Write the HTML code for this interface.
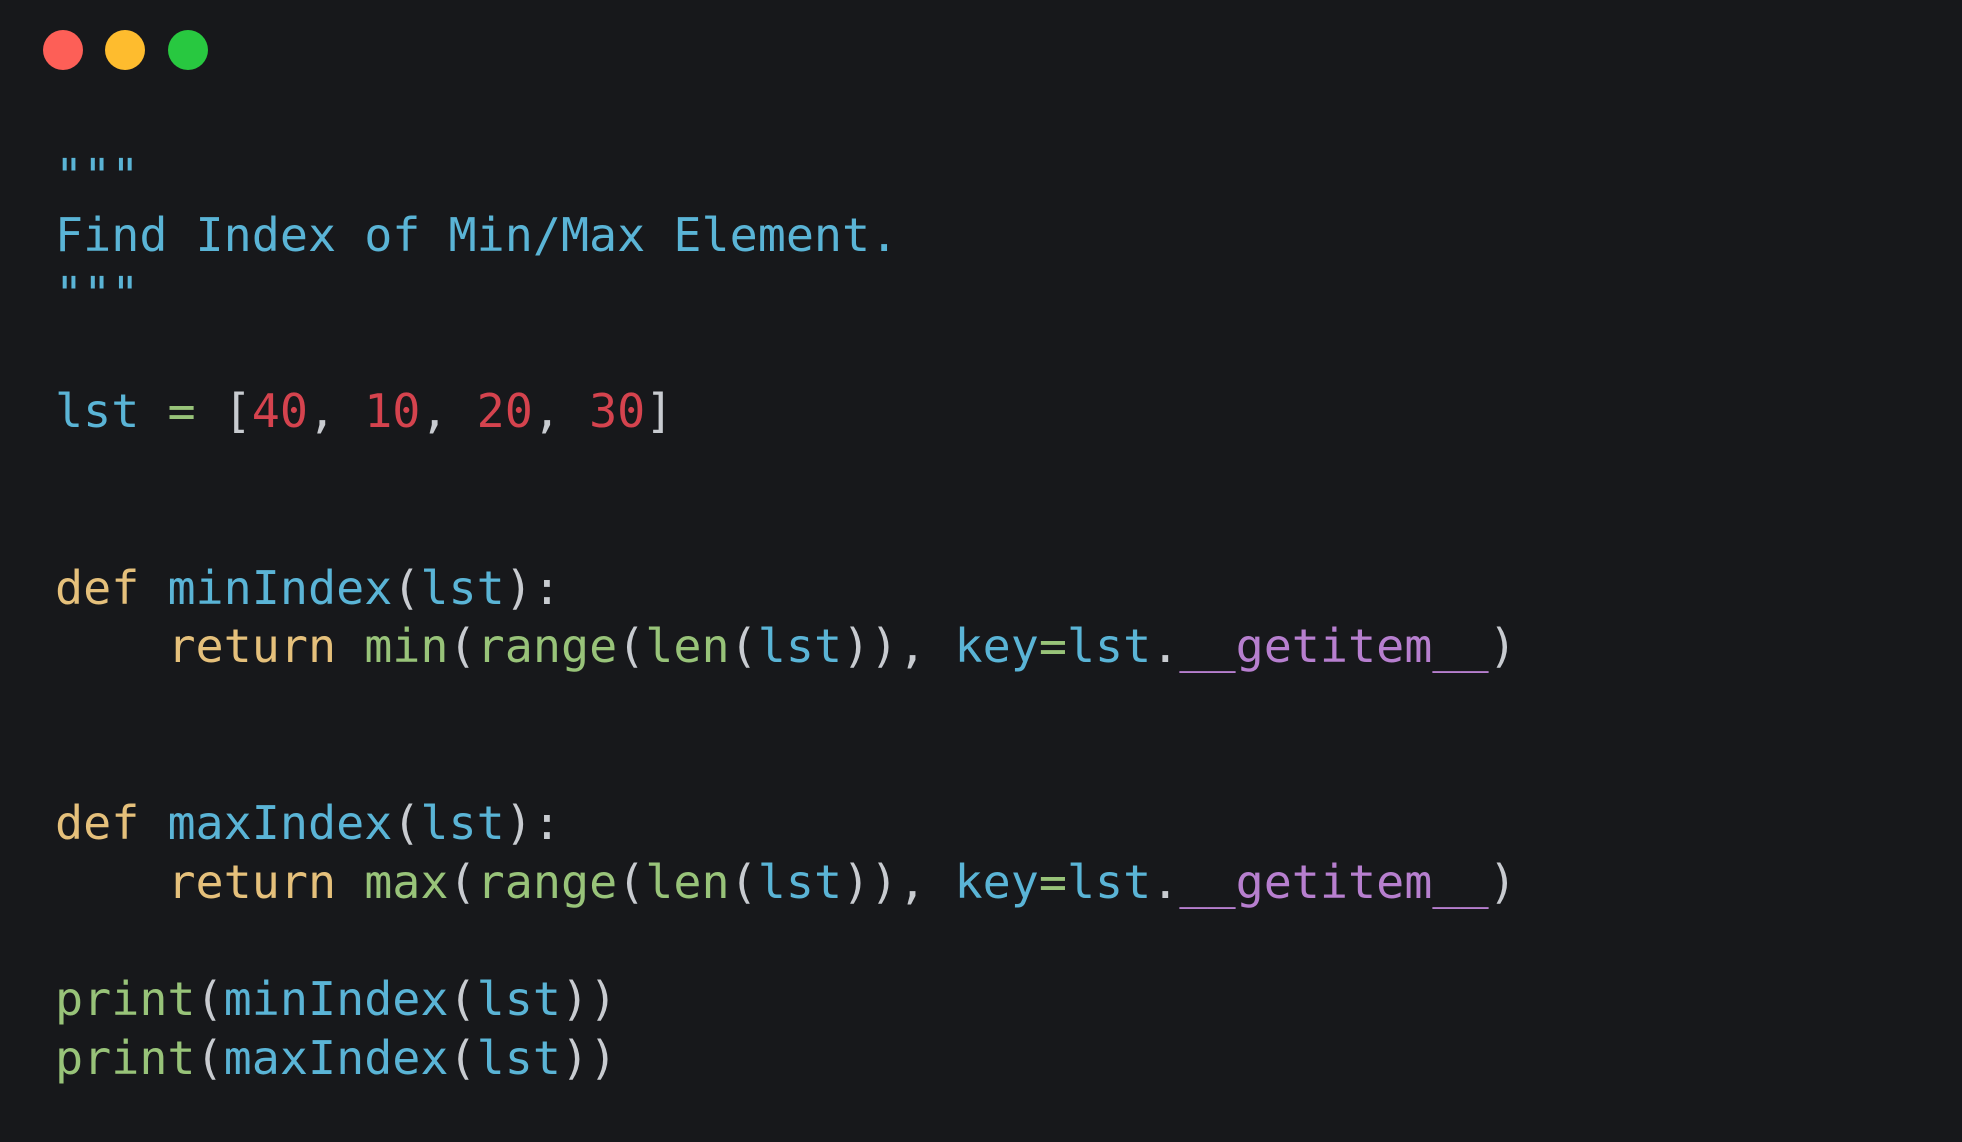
<!DOCTYPE html>
<html><head><meta charset="utf-8"><style>
html,body{margin:0;padding:0;background:#17181b;width:1962px;height:1142px;overflow:hidden}
.d{position:absolute;top:30px;width:40px;height:40px;border-radius:50%}
pre{position:absolute;left:55px;top:148px;margin:0;font-family:"DejaVu Sans Mono","Liberation Mono",monospace;font-size:46.7px;line-height:58.8px;color:#abb2bf}
.b{color:#5ab4d6}.y{color:#e5c07b}.g{color:#98c379}.r{color:#d5434e}.p{color:#b77fcf}.w{color:#c8cbd0}
</style></head><body>
<div class="d" style="left:43px;background:#fd5f57"></div>
<div class="d" style="left:105px;background:#febc2e"></div>
<div class="d" style="left:168px;background:#28c840"></div>
<pre><span class="b">"""
Find Index of Min/Max Element.
"""</span>

<span class="b">lst</span> <span class="g">=</span> <span class="w">[</span><span class="r">40</span><span class="w">, </span><span class="r">10</span><span class="w">, </span><span class="r">20</span><span class="w">, </span><span class="r">30</span><span class="w">]</span>


<span class="y">def</span> <span class="b">minIndex</span><span class="w">(</span><span class="b">lst</span><span class="w">):</span>
    <span class="y">return</span> <span class="g">min</span><span class="w">(</span><span class="g">range</span><span class="w">(</span><span class="g">len</span><span class="w">(</span><span class="b">lst</span><span class="w">)), </span><span class="b">key</span><span class="g">=</span><span class="b">lst</span><span class="w">.</span><span class="p">__getitem__</span><span class="w">)</span>


<span class="y">def</span> <span class="b">maxIndex</span><span class="w">(</span><span class="b">lst</span><span class="w">):</span>
    <span class="y">return</span> <span class="g">max</span><span class="w">(</span><span class="g">range</span><span class="w">(</span><span class="g">len</span><span class="w">(</span><span class="b">lst</span><span class="w">)), </span><span class="b">key</span><span class="g">=</span><span class="b">lst</span><span class="w">.</span><span class="p">__getitem__</span><span class="w">)</span>

<span class="g">print</span><span class="w">(</span><span class="b">minIndex</span><span class="w">(</span><span class="b">lst</span><span class="w">))</span>
<span class="g">print</span><span class="w">(</span><span class="b">maxIndex</span><span class="w">(</span><span class="b">lst</span><span class="w">))</span></pre>
</body></html>
